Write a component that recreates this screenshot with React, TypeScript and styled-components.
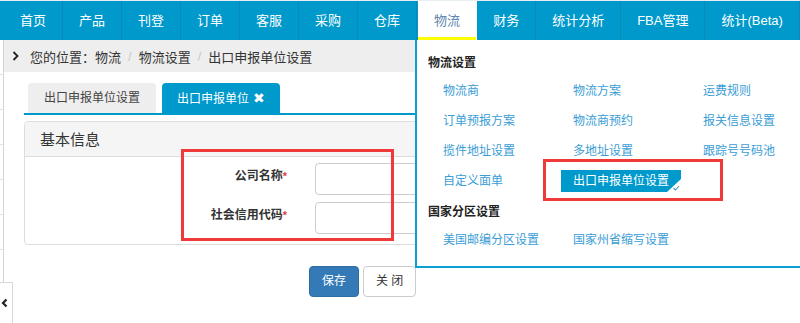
import styled, { createGlobalStyle } from "styled-components";

const GlobalStyle = createGlobalStyle`
  html, body {
    margin: 0;
    padding: 0;
    background: #fff;
  }
  body {
    font-family: "Liberation Sans", "Noto Sans CJK SC", sans-serif;
    color: #333;
    overflow: hidden;
  }
  * {
    box-sizing: border-box;
  }
`;

const Page = styled.div`
  position: relative;
  width: 800px;
  height: 323px;
  overflow: hidden;
`;

const TopNav = styled.div`
  display: flex;
  height: 40px;
  padding-left: 4px;
  background: #0099cc;
  border-top: 1px solid #e6eef2;
`;

const NavItem = styled.div<{ $active?: boolean }>`
  padding: 0 16px;
  line-height: 39px;
  font-size: 13px;
  white-space: nowrap;
  color: ${(p) => (p.$active ? "#5f86ad" : "#fff")};
  background: ${(p) => (p.$active ? "#fff" : "transparent")};
  border-right: 1px solid ${(p) => (p.$active ? "#fff" : "#0a88b6")};
  box-shadow: ${(p) => (p.$active ? "inset 0 -3px 0 #ffff00" : "none")};
  margin-left: ${(p) => (p.$active ? "1px" : "0")};
`;

const Body = styled.div`
  display: flex;
  height: 283px;
`;

const Sidebar = styled.div`
  width: 4px;
  border-right: 1px solid #d4d4d4;
`;

const SideItem = styled.div`
  height: 35px;
  border-bottom: 1px solid #e4e4e4;
`;

const SideToggle = styled.div`
  position: absolute;
  left: 0;
  top: 282px;
  width: 13px;
  height: 41px;
  background: #fff;
  border: 1px solid #d8d8d8;
  border-left: none;
  border-bottom: none;
  display: flex;
  align-items: center;
  padding-left: 1px;
`;

const Main = styled.div`
  flex: 1;
`;

const Breadcrumb = styled.div`
  display: flex;
  align-items: center;
  height: 32px;
  background: #eeeeee;
  padding-left: 8px;
  font-size: 13px;
  color: #333;
`;

const Crumbs = styled.div`
  display: flex;
  align-items: center;
  margin-left: 11px;
`;

const CrumbSep = styled.span`
  color: #c8c8c8;
  padding: 0 7px;
`;

const Content = styled.div`
  padding: 11px 20px 0 20px;
`;

const Tabs = styled.div`
  display: flex;
  gap: 6px;
  padding-left: 4px;
  border-bottom: 2px solid #0099cc;
`;

const Tab = styled.div<{ $active?: boolean }>`
  height: 30px;
  line-height: 30px;
  padding: 0 ${(p) => (p.$active ? "15px" : "16px")};
  font-size: 12px;
  border-radius: 4px 4px 0 0;
  color: ${(p) => (p.$active ? "#fff" : "#444")};
  background: ${(p) => (p.$active ? "#0099cc" : "#eeeeee")};
`;

const CloseMark = styled.span`
  font-family: "DejaVu Sans", sans-serif;
  font-size: 14px;
  margin-left: 4px;
`;

const Panel = styled.div`
  margin-top: 6px;
  border: 1px solid #dddddd;
  border-radius: 4px;
`;

const PanelHeader = styled.div`
  height: 35px;
  line-height: 35px;
  padding-left: 15px;
  font-size: 15px;
  color: #333;
  background: #f5f5f5;
  border-bottom: 1px solid #dddddd;
  border-radius: 4px 4px 0 0;
`;

const PanelBody = styled.div`
  display: grid;
  grid-template-columns: 262px 300px;
  column-gap: 28px;
  row-gap: 7px;
  padding: 6px 0 10px;
`;

const Label = styled.label`
  text-align: right;
  font-size: 12px;
  font-weight: bold;
  line-height: 18px;
  padding-top: 4px;
  color: #333;
`;

const Star = styled.span`
  color: #e23b3b;
  font-size: 11px;
  vertical-align: top;
`;

const Input = styled.div`
  height: 32px;
  border: 1px solid #cccccc;
  border-radius: 4px;
  background: #fff;
`;

const ButtonRow = styled.div`
  display: flex;
  gap: 4px;
  margin-top: 21px;
  padding-left: 285px;
`;

const Button = styled.div<{ $primary?: boolean }>`
  height: 31px;
  line-height: 29px;
  padding: 0 12px;
  font-size: 12px;
  border-radius: 4px;
  border: 1px solid ${(p) => (p.$primary ? "#2e6da4" : "#cccccc")};
  background: ${(p) => (p.$primary ? "#337ab7" : "#fff")};
  color: ${(p) => (p.$primary ? "#fff" : "#333")};
`;

const Menu = styled.div`
  position: absolute;
  left: 415px;
  top: 40px;
  width: 400px;
  height: 228px;
  background: #fff;
  border: 2px solid #0aa0d2;
  border-top: none;
  padding: 13px 0 0 11px;
`;

const MenuHeading = styled.div<{ $gap?: number }>`
  font-size: 12px;
  font-weight: bold;
  line-height: 20px;
  color: #222;
  margin-top: ${(p) => p.$gap ?? 0}px;
`;

const MenuGrid = styled.div`
  display: grid;
  grid-template-columns: repeat(3, 130px);
  row-gap: 8px;
  margin: 7px 0 0 3px;
`;

const MenuItem = styled.div<{ $selected?: boolean }>`
  position: relative;
  justify-self: start;
  height: 22px;
  line-height: 22px;
  padding: 0 12px;
  font-size: 12px;
  white-space: nowrap;
  color: ${(p) => (p.$selected ? "#fff" : "#3a9dd6")};
  background: ${(p) => (p.$selected ? "#0099cc" : "transparent")};
`;

const CheckCorner = styled.svg`
  position: absolute;
  right: 0;
  bottom: 0;
`;

const RedBox = styled.div<{ $x: number; $y: number; $w: number; $h: number }>`
  position: absolute;
  left: ${(p) => p.$x}px;
  top: ${(p) => p.$y}px;
  width: ${(p) => p.$w}px;
  height: ${(p) => p.$h}px;
  border: 3px solid #f03a3a;
  pointer-events: none;
`;

const navItems = ["首页", "产品", "刊登", "订单", "客服", "采购", "仓库", "物流", "财务", "统计分析", "FBA管理", "统计(Beta)"];

const logisticsItems = [
  "物流商",
  "物流方案",
  "运费规则",
  "订单预报方案",
  "物流商预约",
  "报关信息设置",
  "揽件地址设置",
  "多地址设置",
  "跟踪号号码池",
  "自定义面单",
  "出口申报单位设置",
];

const regionItems = ["美国邮编分区设置", "国家州省缩写设置"];

const App = () => {
  return (
    <>
      <GlobalStyle />
      <Page>
        <TopNav>
          {navItems.map((n) => (
            <NavItem key={n} $active={n === "物流"}>
              {n}
            </NavItem>
          ))}
        </TopNav>

        <Body>
          <Sidebar>
            {Array.from({ length: 7 }).map((_, i) => (
              <SideItem key={i} />
            ))}
          </Sidebar>

          <Main>
            <Breadcrumb>
              <svg width="7" height="10" viewBox="0 0 7 10">
                <path d="M1.5 1 L5.5 5 L1.5 9" fill="none" stroke="#222" strokeWidth="1.8" />
              </svg>
              <Crumbs>
                <span>您的位置：</span>
                <span>物流</span>
                <CrumbSep>/</CrumbSep>
                <span>物流设置</span>
                <CrumbSep>/</CrumbSep>
                <span>出口申报单位设置</span>
              </Crumbs>
            </Breadcrumb>

            <Content>
              <Tabs>
                <Tab>出口申报单位设置</Tab>
                <Tab $active>
                  出口申报单位<CloseMark>✖</CloseMark>
                </Tab>
              </Tabs>

              <Panel>
                <PanelHeader>基本信息</PanelHeader>
                <PanelBody>
                  <Label>
                    公司名称<Star>*</Star>
                  </Label>
                  <Input />
                  <Label>
                    社会信用代码<Star>*</Star>
                  </Label>
                  <Input />
                </PanelBody>
              </Panel>

              <ButtonRow>
                <Button $primary>保存</Button>
                <Button>关 闭</Button>
              </ButtonRow>
            </Content>
          </Main>
        </Body>

        <SideToggle>
          <svg width="7" height="10" viewBox="0 0 7 10">
            <path d="M5.5 1.5 L2 5 L5.5 8.5" fill="none" stroke="#222" strokeWidth="2.2" />
          </svg>
        </SideToggle>

        <Menu>
          <MenuHeading>物流设置</MenuHeading>
          <MenuGrid>
            {logisticsItems.map((item) => {
              const selected = item === "出口申报单位设置";
              return (
                <MenuItem key={item} $selected={selected}>
                  {item}
                  {selected && (
                    <CheckCorner width="14" height="13" viewBox="0 0 14 13">
                      <polygon points="14,0 14,13 0,13" fill="#fff" />
                      <path d="M6.5 9 L8.5 11 L12 7" fill="none" stroke="#4d8fbf" strokeWidth="1.1" />
                    </CheckCorner>
                  )}
                </MenuItem>
              );
            })}
          </MenuGrid>
          <MenuHeading $gap={10}>国家分区设置</MenuHeading>
          <MenuGrid>
            {regionItems.map((item) => (
              <MenuItem key={item}>{item}</MenuItem>
            ))}
          </MenuGrid>
        </Menu>

        <RedBox $x={181} $y={149} $w={213} $h={92} />
        <RedBox $x={543} $y={159} $w={180} $h={42} />
      </Page>
    </>
  );
};

export default App;
